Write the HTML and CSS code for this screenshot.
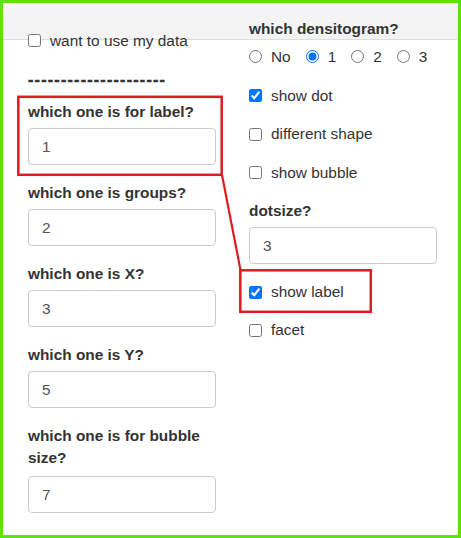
FILE: index.html
```html
<!DOCTYPE html>
<html>
<head>
<meta charset="utf-8">
<link rel="stylesheet" href="styles.css">
</head>
<body>
<div class="frame">
  <div class="cols">
    <div class="col col-left">
      <label class="check"><input type="checkbox"><span>want to use my data</span></label>
      <div class="dashes">---------------------</div>
      <div class="group first">
        <label class="lbl">which one is for label?</label>
        <input class="field" type="text" value="1">
      </div>
      <div class="group">
        <label class="lbl">which one is groups?</label>
        <input class="field" type="text" value="2">
      </div>
      <div class="group">
        <label class="lbl">which one is X?</label>
        <input class="field" type="text" value="3">
      </div>
      <div class="group">
        <label class="lbl">which one is Y?</label>
        <input class="field" type="text" value="5">
      </div>
      <div class="group last">
        <label class="lbl">which one is for bubble size?</label>
        <input class="field" type="text" value="7">
      </div>
    </div>
    <div class="col col-right">
      <label class="lbl">which densitogram?</label>
      <div class="radios">
        <label class="radio"><input type="radio" name="dens"><span>No</span></label>
        <label class="radio"><input type="radio" name="dens" checked><span>1</span></label>
        <label class="radio"><input type="radio" name="dens"><span>2</span></label>
        <label class="radio"><input type="radio" name="dens"><span>3</span></label>
      </div>
      <label class="check dot"><input type="checkbox" checked><span>show dot</span></label>
      <label class="check row"><input type="checkbox"><span>different shape</span></label>
      <label class="check row"><input type="checkbox"><span>show bubble</span></label>
      <div class="group dotsize">
        <label class="lbl">dotsize?</label>
        <input class="field" type="text" value="3">
      </div>
      <label class="check after"><input type="checkbox" checked><span>show label</span></label>
      <label class="check after"><input type="checkbox"><span>facet</span></label>
    </div>
  </div>
  <svg class="annot" width="461" height="538" viewBox="0 0 461 538" xmlns="http://www.w3.org/2000/svg">
    <rect x="18.3" y="96.8" width="203.4" height="78" fill="none" stroke="#e01b24" stroke-width="2.5"/>
    <rect x="240.3" y="270.3" width="130.5" height="41.5" fill="none" stroke="#e01b24" stroke-width="2.5"/>
    <line x1="222" y1="175" x2="240.5" y2="270" stroke="#e01b24" stroke-width="2.2"/>
  </svg>
</div>
</body>
</html>
```
FILE: styles.css
```css
html, body {
  margin: 0;
  padding: 0;
  background: #fff;
}

.frame {
  position: relative;
  width: 461px;
  height: 538px;
  box-sizing: border-box;
  border: 3px solid #5ee20d;
  background: linear-gradient(to bottom, #f4f4f4 0, #f4f4f4 36px, #dedede 36px, #dedede 37px, #ffffff 37px);
  font-family: "Liberation Sans", Arial, sans-serif;
  font-size: 15.4px;
  color: #333;
  overflow: hidden;
}

.cols {
  display: grid;
  grid-template-columns: 188px 188px;
  column-gap: 33px;
  padding-left: 25px;
}

.col-left {
  padding-top: 27.5px;
}

.col-right {
  padding-top: 15px;
}

.check {
  display: flex;
  align-items: center;
  gap: 9px;
  height: 20px;
  line-height: 20px;
}

.check input,
.radio input {
  margin: 0;
  width: 13px;
  height: 13px;
  flex: none;
}

.dashes {
  margin-top: 19.5px;
  height: 20px;
  line-height: 20px;
  font-weight: bold;
  font-size: 16px;
  letter-spacing: 1.25px;
  white-space: nowrap;
  -webkit-text-stroke: 0.5px #333;
}

.lbl {
  display: block;
  font-weight: bold;
  line-height: 22px;
  margin-bottom: 5px;
}

.col-right > .lbl {
  margin-bottom: 0;
}

.group {
  margin-bottom: 17px;
}

.group.first {
  margin-top: 11px;
}

.group.last .lbl {
  margin-bottom: 7px;
}

.field {
  display: block;
  box-sizing: border-box;
  width: 188px;
  height: 37px;
  margin: 0;
  border: 1px solid #ccc;
  border-radius: 4px;
  padding: 0 13px;
  font-family: inherit;
  font-size: 15.4px;
  color: #555;
  background: #fff;
  outline: none;
}

.radios {
  display: flex;
  gap: 15px;
  margin-top: 6.5px;
  height: 20px;
}

.radio {
  display: flex;
  align-items: center;
  gap: 9px;
  line-height: 20px;
}

.check.dot {
  margin-top: 19px;
}

.check.row {
  margin-top: 18.5px;
}

.group.dotsize {
  margin-top: 17.5px;
  margin-bottom: 0;
}

.check.after {
  margin-top: 18px;
}

.annot {
  position: absolute;
  top: -3px;
  left: -3px;
  pointer-events: none;
}
```
